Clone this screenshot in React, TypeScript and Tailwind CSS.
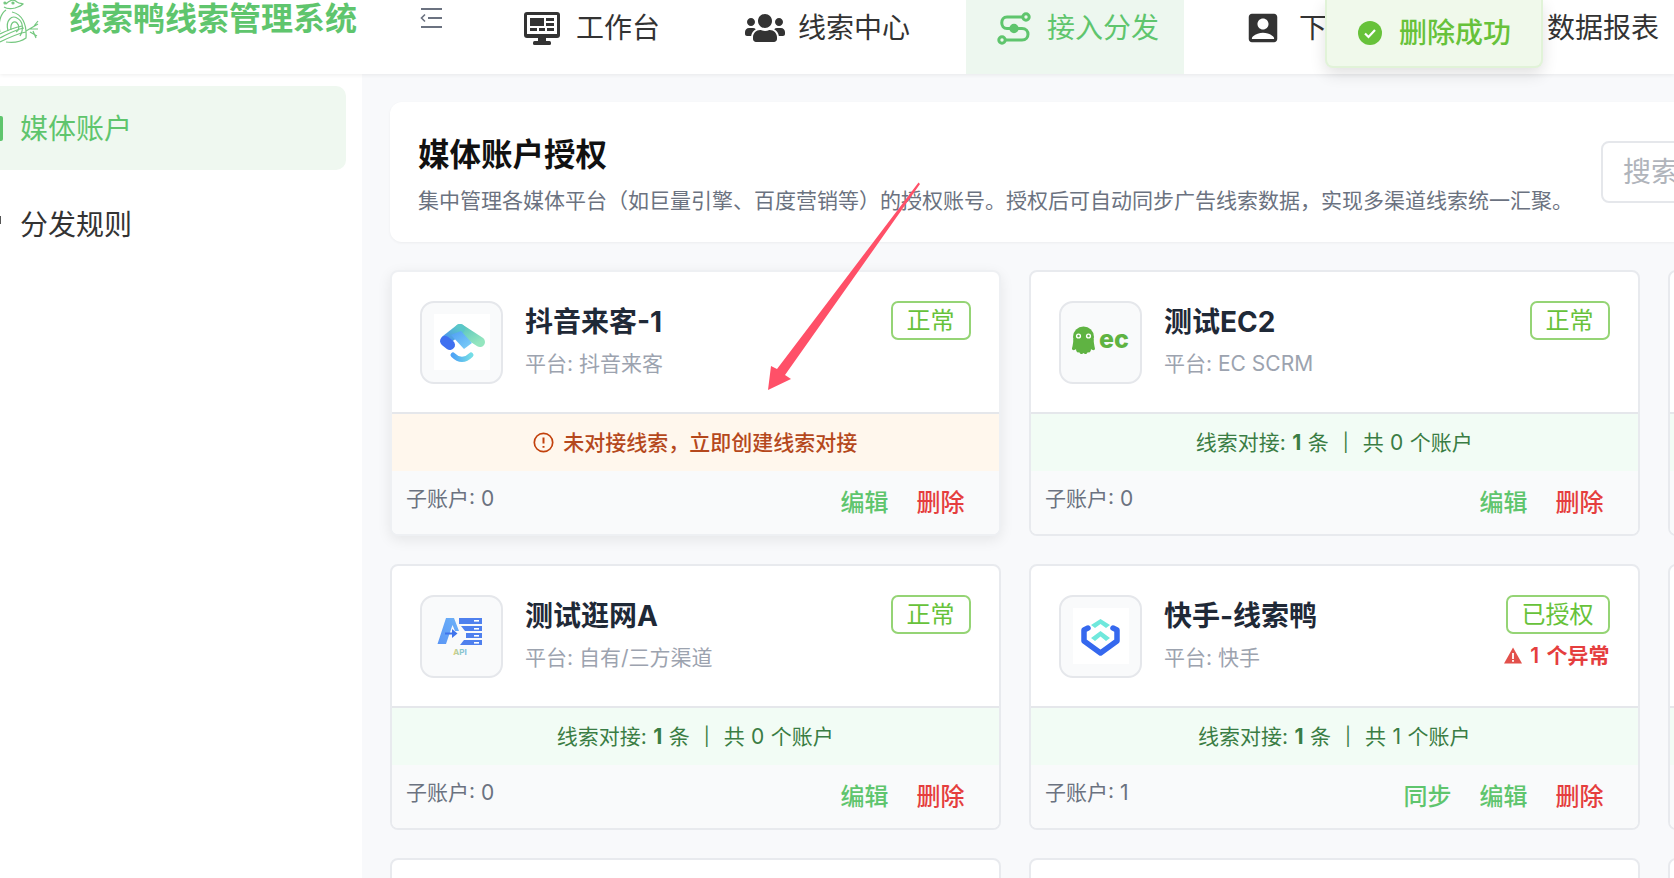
import React from "react";
import { FaUsers } from "react-icons/fa";
import { MdAccountBox } from "react-icons/md";

function DuckLogo() {
  return (
    <svg width="40" height="44" viewBox="0 0 40 44" fill="none" stroke="#74c77f" strokeWidth="1.2" className="shrink-0">
      <path d="M6 4 C10 0 14 -1 17 2 C20 4 21 3 23 4 C20 7 17 7 15 8 C11 9 7 9 4 7" />
      <circle cx="13" cy="3" r="1" fill="#74c77f" />
      <circle cx="5" cy="3" r="1" fill="#74c77f" />
      <path d="M6 10 C0 14 -2 24 0 32" />
      <path d="M12 12 C22 14 27 24 26 38 C22 41 14 43 6 42" />
      <path d="M8 31 C5 20 12 15 17 18 C23 21 24 29 20 36" />
      <path d="M11 30 C10 23 14 20 17 23 C20 26 19 31 16 32" />
      <path d="M0 38 C8 34 14 30 24 28" />
      <path d="M0 34 C6 31 12 28 22 26" />
      <path d="M0 42 C8 38 16 34 26 32" />
      <path d="M26 31 L38 24 M30 29 L38 29 M30 32 L37 36 M34 26 L38 21 M33 31 L36 38" />
    </svg>
  );
}

function CollapseIcon() {
  return (
    <svg width="22" height="22" viewBox="0 0 22 22" fill="none" stroke="#6b7280" strokeWidth="2" className="shrink-0">
      <path d="M1 2 H22 M8 11 H22 M1 20 H22" />
      <path d="M5 7.5 L1.5 11 L5 14.5" strokeWidth="1.6" />
    </svg>
  );
}

function MonitorIcon() {
  return (
    <svg width="36" height="33" viewBox="0 0 36 33" className="shrink-0">
      <rect x="0" y="0" width="36" height="26" rx="3" fill="#333" />
      <rect x="3" y="3" width="30" height="19" fill="#fff" />
      <rect x="6" y="6" width="14" height="8" fill="#333" />
      <rect x="22" y="6" width="8" height="3" fill="#333" />
      <rect x="22" y="11" width="8" height="3" fill="#333" />
      <rect x="6" y="16" width="7" height="3" fill="#333" />
      <rect x="15" y="16" width="6" height="3" fill="#333" />
      <rect x="23" y="16" width="7" height="3" fill="#333" />
      <rect x="14" y="26" width="8" height="4" fill="#333" />
      <rect x="9" y="29" width="18" height="4" rx="1.5" fill="#333" />
    </svg>
  );
}

function RouteIcon() {
  return (
    <svg width="34" height="33" viewBox="0 0 34 33" fill="none" stroke="#5fc56d" strokeWidth="3" className="shrink-0">
      <circle cx="29" cy="5" r="3.2" />
      <circle cx="5" cy="28" r="3.2" />
      <circle cx="17" cy="16.5" r="3.2" fill="#5fc56d" />
      <path d="M25.5 5 H10 C3 5 3 16.5 10 16.5 H25 C33 16.5 33 28 25 28 H8.5" strokeLinecap="round" />
    </svg>
  );
}

function NavItem(props: { icon: React.ReactNode; label: string; gap: string; ml: string; active?: boolean }) {
  return (
    <div
      className={
        "flex items-center pl-[31px] pr-[25px] pb-[18px] text-[28px] " +
        props.ml +
        " " +
        props.gap +
        (props.active ? " bg-[#edf7ef] text-[#5fc56d]" : " text-[#333333]")
      }
    >
      {props.icon}
      <span>{props.label}</span>
    </div>
  );
}

function Header() {
  return (
    <header className="h-[74px] shrink-0 bg-white flex items-stretch shadow-[0_1px_4px_rgba(0,0,0,0.07)] relative z-10">
      <div className="flex items-start">
        <DuckLogo />
      </div>
      <div className="ml-[29px] mt-[1px] text-[32px] leading-[36px] font-bold text-[#5fc56d] whitespace-nowrap">线索鸭线索管理系统</div>
      <div className="ml-[63px] mt-[7px]">
        <CollapseIcon />
      </div>
      <div className="flex items-stretch ml-[51px] whitespace-nowrap">
        <NavItem icon={<MonitorIcon />} label="工作台" gap="gap-[16px]" ml="ml-0" />
        <NavItem icon={<FaUsers size={40} color="#333" />} label="线索中心" gap="gap-[13px]" ml="ml-[29px]" />
        <NavItem icon={<RouteIcon />} label="接入分发" gap="gap-[16px]" ml="ml-[31px]" active />
        <NavItem
          icon={
            <span className="w-[30px] h-[30px] flex items-center justify-center">
              <MdAccountBox size={38} color="#333" className="shrink-0" />
            </span>
          }
          label="下载中心"
          gap="gap-[21px]"
          ml="ml-[33px]"
        />
        <NavItem icon={<span className="w-[33px] h-[30px]" />} label="数据报表" gap="gap-[16px]" ml="ml-[31px]" />
      </div>
    </header>
  );
}

function Sidebar() {
  return (
    <aside className="w-[362px] shrink-0 bg-white pr-[16px] pt-[12px] flex flex-col gap-[13px]">
      <div className="-ml-[20px] pl-[20px] pt-[1px] h-[84px] rounded-[10px] bg-[#eff8f0] flex items-center text-[28px] text-[#5fc56d]">
        <span className="w-[3px] h-[25px] rounded-r-[2px] bg-[#5fc56d] mr-[17px]" />
        媒体账户
      </div>
      <div className="h-[84px] flex items-center text-[28px] text-[#333333]">
        <span className="w-[1px] h-[8px] bg-[#555555] mr-[19px] -mt-[10px]" />
        分发规则
      </div>
    </aside>
  );
}

function DouyinLogo() {
  return (
    <svg width="56" height="56" viewBox="0 0 56 56" fill="none">
      <defs>
        <linearGradient id="dy1" x1="0" y1="0" x2="1" y2="1">
          <stop offset="0" stopColor="#5cc6bd" />
          <stop offset="1" stopColor="#94e6bf" />
        </linearGradient>
        <linearGradient id="dy2" x1="1" y1="0" x2="0" y2="1">
          <stop offset="0" stopColor="#5ac7c9" />
          <stop offset="1" stopColor="#4a8ff0" />
        </linearGradient>
        <linearGradient id="dy3" x1="0" y1="0" x2="1" y2="1">
          <stop offset="0" stopColor="#4f9df5" />
          <stop offset="1" stopColor="#7fd2f7" />
        </linearGradient>
        <linearGradient id="dy4" x1="0" y1="0" x2="1" y2="0">
          <stop offset="0" stopColor="#4ea3f5" />
          <stop offset="1" stopColor="#74dde6" />
        </linearGradient>
      </defs>
      <path d="M26 15 L46 28" stroke="url(#dy1)" strokeWidth="10" strokeLinecap="round" />
      <path d="M26 15 L12 26" stroke="url(#dy2)" strokeWidth="10" strokeLinecap="round" />
      <path d="M17 21 L27 17 L38 29 L30 35 Z" fill="url(#dy3)" />
      <path d="M11 27 L16 31" stroke="#3f6ff0" strokeWidth="10" strokeLinecap="round" />
      <path d="M19 41 Q28 50 37 41" stroke="url(#dy4)" strokeWidth="5" strokeLinecap="round" />
    </svg>
  );
}

function EcLogo() {
  return (
    <svg width="79" height="79" viewBox="0 0 79 79">
      <circle cx="22.5" cy="34" r="10.5" fill="#5fb342" />
      <path d="M12.5 36 H32.5 C33 42 34 45 34 46 C33 48 31 47 30 46 C30 49 28 50.5 27 49 C26 51 24 52 22.5 50 C21 52 19 51 18 49 C17 50.5 15 49 15 46 C14 47 12 48 11 46 C11 45 12 42 12.5 36 Z" fill="#5fb342" />
      <circle cx="17.5" cy="33" r="2.6" fill="#fff" />
      <circle cx="27.5" cy="33" r="2.6" fill="#fff" />
      <circle cx="17.5" cy="33" r="1.2" fill="#5fb342" />
      <circle cx="27.5" cy="33" r="1.2" fill="#5fb342" />
      <text x="38" y="44.5" fontFamily="Inter, sans-serif" fontSize="25" fontWeight="800" fill="#5fb342">
        ec
      </text>
    </svg>
  );
}

function ApiLogo() {
  return (
    <svg width="79" height="79" viewBox="0 0 79 79">
      <defs>
        <linearGradient id="ap1" x1="0" y1="1" x2="1" y2="0">
          <stop offset="0" stopColor="#5b96f5" />
          <stop offset="1" stopColor="#6db2f8" />
        </linearGradient>
        <linearGradient id="ap2" x1="0" y1="0" x2="1" y2="0">
          <stop offset="0" stopColor="#e6cf72" />
          <stop offset="0.5" stopColor="#8cc9c4" />
          <stop offset="1" stopColor="#7ab8e0" />
        </linearGradient>
      </defs>
      <path d="M15.5 47 L24 21 L32 21 L37 34 L33 34 L30.5 28 L24 47 Z" fill="url(#ap1)" />
      <path d="M23 36.5 H32" stroke="#3f74ec" strokeWidth="2" />
      <path d="M30 32 L35.5 36.5 L30 41 Z" fill="#3f74ec" />
      <path d="M37 21 H60 V27 H37 Z" fill="#4f80ee" />
      <path d="M39 29 H60 V34 H43 Z" fill="#4f80ee" />
      <path d="M44 36 H60 V41 H44 Z" fill="#4f80ee" />
      <path d="M38 48 L42 43 H60 V48 Z" fill="#4f80ee" />
      <rect x="52" y="23" width="5" height="1.6" fill="#fff" />
      <rect x="52" y="31" width="5" height="1.6" fill="#fff" />
      <rect x="52" y="38" width="5" height="1.6" fill="#fff" />
      <rect x="52" y="45" width="5" height="1.6" fill="#fff" />
      <text x="38" y="58" textAnchor="middle" fontFamily="Inter, sans-serif" fontSize="8" fontWeight="700" fill="url(#ap2)">
        API
      </text>
    </svg>
  );
}

function KuaishouLogo() {
  return (
    <svg width="56" height="56" viewBox="0 0 56 56" fill="none">
      <path d="M15 20 L11 22 V33 L27.5 45 L44 33 V22 L40 20" stroke="#3568ee" strokeWidth="5.5" strokeLinejoin="round" strokeLinecap="round" />
      <path d="M18 17 L27.5 11 L37 17 L33 20 L27.5 16 L22 20 Z" fill="#6fe8dc" />
      <path d="M18 30 L27.5 23 L37 30 L33 33 L27.5 28.5 L22 33 Z" fill="#6fe8dc" />
    </svg>
  );
}

function LogoBox(props: { children: React.ReactNode; white?: boolean }) {
  return (
    <div className="w-[83px] h-[83px] shrink-0 rounded-[14px] border-2 border-[#e5e7eb] bg-[#f9fafb] flex items-center justify-center">
      {props.white ? <div className="w-[56px] h-[56px] bg-white">{props.children}</div> : props.children}
    </div>
  );
}

type CardProps = {
  logo: React.ReactNode;
  title: string;
  platform: string;
  badge: string;
  warn?: string;
  strip: React.ReactNode;
  sub: string;
  sync?: boolean;
  hover?: boolean;
};

function Card(p: CardProps) {
  return (
    <div
      className={
        "h-[265.5px] rounded-[8px] border-2 flex flex-col overflow-hidden bg-white " +
        (p.hover ? "border-[#eef0f3] shadow-[0_4px_14px_rgba(0,0,0,0.08)]" : "border-[#e8eaee]")
      }
    >
      <div className="h-[142px] shrink-0 border-b-2 border-[#e5e7eb] pt-[28.5px] pl-[28px] pr-[28px] flex items-start">
        <LogoBox white={p.title === "抖音来客-1" || p.title === "快手-线索鸭"}>{p.logo}</LogoBox>
        <div className="ml-[22px] pt-[1px] flex-1 min-w-0">
          <div className="text-[28px] leading-[40px] font-bold text-[#1f2937] whitespace-nowrap">{p.title}</div>
          <div className="mt-[7px] text-[21px] leading-[30px] text-[#9ca3af] whitespace-nowrap">平台: {p.platform}</div>
        </div>
        <div className="flex flex-col items-end shrink-0">
          <div className="h-[39px] px-[14px] rounded-[7px] border-2 border-[#95d475] bg-white text-[24px] leading-[35px] text-[#67c23a]">
            {p.badge}
          </div>
          {p.warn ? (
            <div className="mt-[7px] flex items-center gap-[8px] text-[21px] leading-[30px] font-semibold text-[#e53e3e] whitespace-nowrap [word-spacing:2px]">
              <svg width="18" height="17" viewBox="0 0 18 17">
                <path d="M9 0.5 L18 16.5 H0 Z" fill="#e2504b" />
                <rect x="8.1" y="6" width="1.8" height="6" fill="#fff" />
                <rect x="8.1" y="13" width="1.8" height="1.8" fill="#fff" />
              </svg>
              {p.warn}
            </div>
          ) : null}
        </div>
      </div>
      {p.strip}
      <div className="flex-1 bg-[#f9fafb] flex items-start justify-between pl-[14px] pr-[34px]">
        <div className="mt-[13px] text-[21px] leading-[30px] text-[#6b7280]">子账户: {p.sub}</div>
        <div className="mt-[14px] flex gap-[28px] text-[24px] leading-[36px] font-medium">
          {p.sync ? <span className="text-[#5fc56d]">同步</span> : null}
          <span className="text-[#5fc56d]">编辑</span>
          <span className="text-[#e53e3e]">删除</span>
        </div>
      </div>
    </div>
  );
}

function GreenStrip(props: { count: string }) {
  return (
    <div className="h-[57px] shrink-0 bg-[#f2fcf5] flex items-center justify-center text-[21px] text-[#3a7d44] whitespace-pre [word-spacing:0.5px]">
      线索对接: <b className="font-bold">1</b> 条<span className="mx-[14px] text-[18px]">|</span>共 {props.count} 个账户
    </div>
  );
}

function WarnStrip() {
  return (
    <div className="h-[57px] shrink-0 bg-[#fff7ed] flex items-center justify-center gap-[9px] text-[21px] font-medium text-[#b5481c]">
      <svg width="21" height="21" viewBox="0 0 21 21" fill="none" stroke="#c2410c" strokeWidth="1.7">
        <circle cx="10.5" cy="10.5" r="9.2" />
        <path d="M10.5 5.5 V11.5 M10.5 14 V15.8" strokeWidth="2" />
      </svg>
      未对接线索，立即创建线索对接
    </div>
  );
}

function Toast() {
  return (
    <div className="absolute left-[1325px] top-0 z-20 w-[218px] h-[68px] rounded-b-[8px] border-2 border-t-0 border-[#e1f3d8] bg-[#f0f9eb] shadow-[0_6px_16px_rgba(0,0,0,0.12)] flex items-center gap-[17px] pl-[31px]">
      <svg width="24" height="24" viewBox="0 0 24 24" className="shrink-0">
        <circle cx="12" cy="12" r="12" fill="#67c23a" />
        <path d="M7 12.5 L10.5 16 L17 9" fill="none" stroke="#fff" strokeWidth="2.2" />
      </svg>
      <span className="text-[28px] font-medium text-[#67c23a] whitespace-nowrap">删除成功</span>
    </div>
  );
}

function Arrow() {
  return (
    <svg className="absolute left-0 top-0 z-10 pointer-events-none" width="1674" height="878" viewBox="0 0 1674 878">
      <path d="M918.5 182.5 L920 184 L785 375 L791 379 L768 390 L771 366 L777 369 Z" fill="#ff5068" />
    </svg>
  );
}

export default function App() {
  return (
    <div className="relative w-[1674px] h-[878px] overflow-hidden bg-[#f8f9fb] flex flex-col font-[Inter,'Noto_Sans_CJK_SC',sans-serif]">
      <Header />
      <div className="flex flex-1 min-h-0">
        <Sidebar />
        <main className="flex-1 min-w-0 overflow-hidden pl-[28px] pt-[28px]">
          <section className="w-[1600px] h-[140px] rounded-[12px] bg-white shadow-[0_1px_3px_rgba(0,0,0,0.05)] flex items-center pl-[28px]">
            <div className="w-[1183px] shrink-0 pt-[4px]">
              <h1 className="text-[31.5px] leading-[44px] font-bold text-[#111111]">媒体账户授权</h1>
              <p className="mt-[9px] text-[21px] leading-[30px] text-[#6b7280] whitespace-nowrap">
                集中管理各媒体平台（如巨量引擎、百度营销等）的授权账号。授权后可自动同步广告线索数据，实现多渠道线索统一汇聚。
              </p>
            </div>
            <div className="w-[300px] h-[62px] shrink-0 rounded-[8px] border-2 border-[#e5e7eb] pl-[20px] flex items-center text-[28px] text-[#b0b4bb]">
              搜索
            </div>
          </section>
          <div className="mt-[28px] grid grid-cols-[repeat(3,610.5px)] gap-x-[28.5px] gap-y-[28.7px]">
            <Card hover logo={<DouyinLogo />} title="抖音来客-1" platform="抖音来客" badge="正常" strip={<WarnStrip />} sub="0" />
            <Card logo={<EcLogo />} title="测试EC2" platform="EC SCRM" badge="正常" strip={<GreenStrip count="0" />} sub="0" />
            <Card logo={null} title="" platform="" badge="" strip={<GreenStrip count="0" />} sub="0" />
            <Card logo={<ApiLogo />} title="测试逛网A" platform="自有/三方渠道" badge="正常" strip={<GreenStrip count="0" />} sub="0" />
            <Card logo={<KuaishouLogo />} title="快手-线索鸭" platform="快手" badge="已授权" warn="1 个异常" strip={<GreenStrip count="1" />} sub="1" sync />
            <Card logo={null} title="" platform="" badge="" strip={<GreenStrip count="0" />} sub="0" />
            <div className="h-[265.5px] rounded-[8px] border-2 border-[#e8eaee] bg-white" />
            <div className="h-[265.5px] rounded-[8px] border-2 border-[#e8eaee] bg-white" />
            <div className="h-[265.5px] rounded-[8px] border-2 border-[#e8eaee] bg-white" />
          </div>
        </main>
      </div>
      <Toast />
      <Arrow />
    </div>
  );
}
